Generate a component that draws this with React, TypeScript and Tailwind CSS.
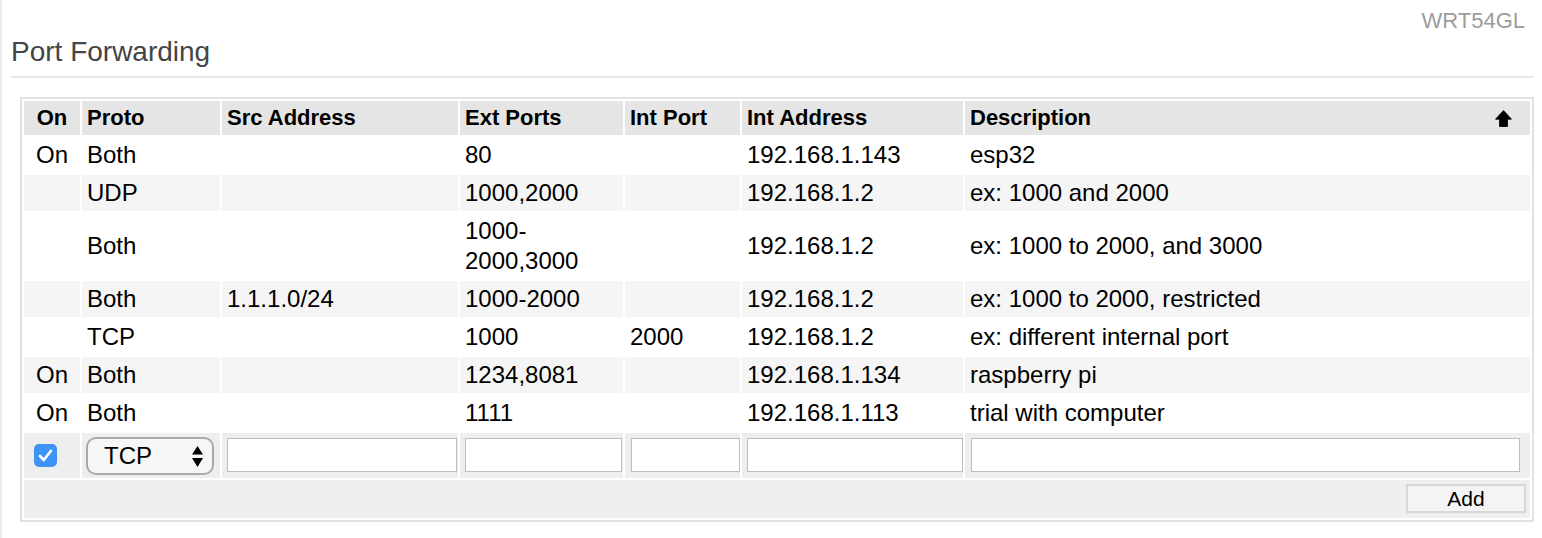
import React from "react";

type Row = {
  on: string;
  proto: string;
  src: string;
  ext: string;
  intPort: string;
  addr: string;
  desc: string;
};

const rows: Row[] = [
  { on: "On", proto: "Both", src: "", ext: "80", intPort: "", addr: "192.168.1.143", desc: "esp32" },
  { on: "", proto: "UDP", src: "", ext: "1000,2000", intPort: "", addr: "192.168.1.2", desc: "ex: 1000 and 2000" },
  { on: "", proto: "Both", src: "", ext: "1000-2000,3000", intPort: "", addr: "192.168.1.2", desc: "ex: 1000 to 2000, and 3000" },
  { on: "", proto: "Both", src: "1.1.1.0/24", ext: "1000-2000", intPort: "", addr: "192.168.1.2", desc: "ex: 1000 to 2000, restricted" },
  { on: "", proto: "TCP", src: "", ext: "1000", intPort: "2000", addr: "192.168.1.2", desc: "ex: different internal port" },
  { on: "On", proto: "Both", src: "", ext: "1234,8081", intPort: "", addr: "192.168.1.134", desc: "raspberry pi" },
  { on: "On", proto: "Both", src: "", ext: "1111", intPort: "", addr: "192.168.1.113", desc: "trial with computer" },
];

const td = "px-[5px] py-[3px] leading-[30px] align-middle";
const th = "px-[5px] py-[3px] leading-[28px] text-left font-bold text-[22px] bg-[#e5e5e5] align-middle";

function UpArrow() {
  return (
    <svg width="17" height="17" viewBox="0 0 17 17" className="block">
      <path d="M8.5 0.5 L16.5 9.2 L12.5 9.2 L12.5 16.5 L4.5 16.5 L4.5 9.2 L0.5 9.2 Z" fill="#000" strokeLinejoin="round" stroke="#000" strokeWidth="0.8" />
    </svg>
  );
}

function TextInput() {
  return <input type="text" className="block w-full h-[34px] bg-white border border-[#bdbdbd] outline-none" />;
}

export default function App() {
  return (
    <div className="min-h-[538px] w-full border-l-2 border-[#ececec] bg-white font-['Liberation_Sans',Arial,sans-serif] text-black">
      <div className="pl-[9px] pr-[8px]">
        <div className="pt-[8px] pr-[9px] text-right text-[22px] leading-[26px] text-[#9c9c9c]">WRT54GL</div>
        <h1 className="mt-[1px] pb-[7px] border-b-2 border-[#e9e9e9] text-[28px] leading-[34px] text-[#444444] font-normal">
          Port Forwarding
        </h1>
        <div className="mt-[19px] ml-[9px]">
          <table className="w-full table-fixed border-separate border-spacing-[2px] border-2 border-[#e2e2e2] text-[24px]">
            <thead>
              <tr>
                <th className={`${th} w-[56px] !text-center`}>On</th>
                <th className={`${th} w-[138px]`}>Proto</th>
                <th className={`${th} w-[236px]`}>Src Address</th>
                <th className={`${th} w-[163px]`}>Ext Ports</th>
                <th className={`${th} w-[115px]`}>Int Port</th>
                <th className={`${th} w-[221px]`}>Int Address</th>
                <th className={`${th} pr-[18px]`}>
                  <div className="flex items-center justify-between">
                    <span>Description</span>
                    <UpArrow />
                  </div>
                </th>
              </tr>
            </thead>
            <tbody>
              {rows.map((r, i) => (
                <tr key={i} className={i % 2 === 1 ? "bg-[#f5f5f5]" : "bg-white"}>
                  <td className={`${td} text-center`}>{r.on}</td>
                  <td className={td}>{r.proto}</td>
                  <td className={td}>{r.src}</td>
                  <td className={td}>{r.ext}</td>
                  <td className={td}>{r.intPort}</td>
                  <td className={td}>{r.addr}</td>
                  <td className={td}>{r.desc}</td>
                </tr>
              ))}
              <tr className="bg-[#eeeeee]">
                <td className="pl-[10px] pt-[5px] pb-[6px] align-middle">
                  <div className="w-[23px] h-[23px] rounded-[5px] bg-[#3d94f6] flex items-center justify-center">
                    <svg width="15" height="13" viewBox="0 0 15 13">
                      <path d="M2 7 L5.8 11 L13 1.8" fill="none" stroke="#fff" strokeWidth="2.6" strokeLinecap="round" strokeLinejoin="round" />
                    </svg>
                  </div>
                </td>
                <td className="pl-[4px] pr-[6px] pt-[4px] pb-[3px] align-middle">
                  <div className="relative h-[38px] w-[128px] rounded-[10px] border-2 border-[#a9a9a9] bg-[#f6f6f6] flex items-center pl-[16px]">
                    <span className="text-[24px] leading-[30px]">TCP</span>
                    <svg className="absolute right-[9px] top-[7px]" width="11" height="21" viewBox="0 0 11 21">
                      <path d="M5.5 0 L11 8.5 L0 8.5 Z" fill="#000" />
                      <path d="M0 12 L11 12 L5.5 21 Z" fill="#000" />
                    </svg>
                  </div>
                </td>
                <td className="pl-[5px] pr-[1px] pt-[5px] pb-[6px]"><TextInput /></td>
                <td className="pl-[5px] pr-[1px] pt-[5px] pb-[6px]"><TextInput /></td>
                <td className="pl-[6px] pr-[0px] pt-[5px] pb-[6px]"><TextInput /></td>
                <td className="pl-[5px] pr-[0px] pt-[5px] pb-[6px]"><TextInput /></td>
                <td className="pl-[6px] pr-[10px] pt-[5px] pb-[6px]"><TextInput /></td>
              </tr>
              <tr className="bg-[#efefef]">
                <td colSpan={7} className="h-[38px] pt-[4px] pb-[5px] pr-[4px]">
                  <div className="flex justify-end">
                    <button className="h-[29px] w-[120px] border-2 border-[#d6d6d6] bg-[#f4f4f4] text-[21px] leading-[25px] text-black">
                      Add
                    </button>
                  </div>
                </td>
              </tr>
            </tbody>
          </table>
        </div>
      </div>
    </div>
  );
}
